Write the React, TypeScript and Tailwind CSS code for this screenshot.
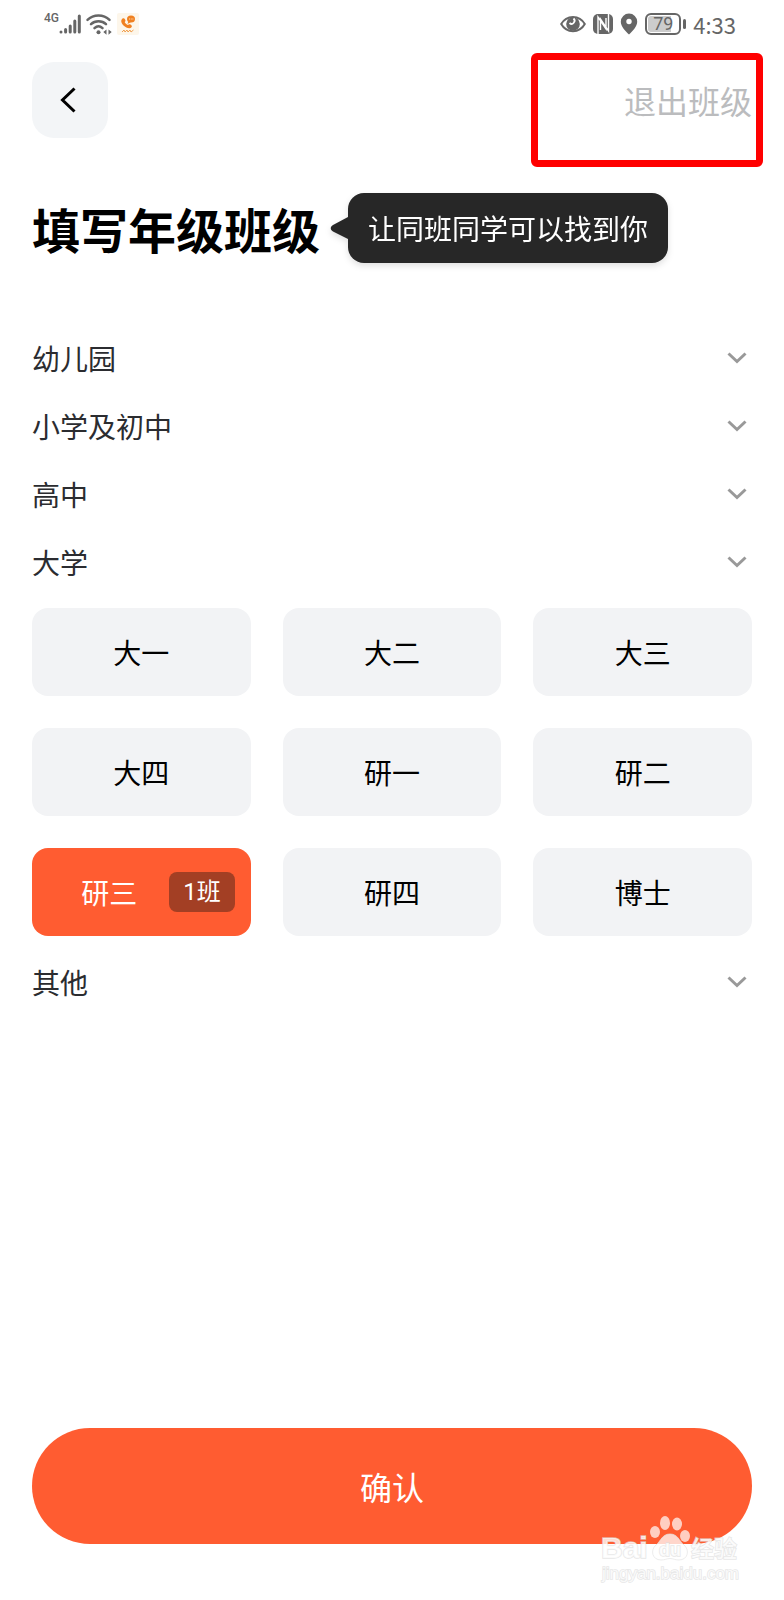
import React, { useState } from 'react';

const OTHER_STAGES = ['幼儿园', '小学及初中', '高中'];
const GRADES = ['大一', '大二', '大三', '大四', '研一', '研二', '研三', '研四', '博士'];

const StatusBar = () => (
  <div className="h-12 px-12 flex items-center justify-between text-[#666666]">
    <div className="flex items-center gap-1">
      <div className="flex items-start">
        <span className="text-[12px] leading-3 -mt-0.5 -ml-1 font-[Roboto,sans-serif] font-medium">4G</span>
        <svg width="22" height="20" viewBox="0 0 22 20" stroke="currentColor" strokeWidth="3" strokeLinecap="round">
          <path d="M2 18v0M6.600 18v-2.500M11.200 18v-6M15.800 18V7M20.300 18V2" />
        </svg>
      </div>
      <svg width="28" height="22" viewBox="0 0 28 22" fill="none" stroke="currentColor" strokeWidth="2.500" strokeLinecap="round">
        <path d="M2.500 6.800C8.500 1 18.500 1 24.500 6.800" />
        <path d="M6 11.200C10 7.300 17 7.300 21 11.200" />
        <path d="M9.500 15.200C12 12.800 15 12.800 17.500 15.200" />
        <circle cx="13.500" cy="19.300" r="2" fill="currentColor" stroke="none" />
        <path d="M21.500 16.500l-3.200 2.600 3.200 2.600zM23.500 16.500l3.200 2.600-3.200 2.600z" fill="currentColor" stroke="none" />
      </svg>
      {/* call app notification */}
      <svg width="22" height="22" viewBox="0 0 22 22">
        <rect width="22" height="22" rx="2" fill="#fdf6ea" />
        <path
          d="M5.500 5.500C3.500 7 4 10 6.500 12.500C9 15 13 16 14.500 14.300C15.300 13.300 14.800 12.300 13.500 11.500C12.300 10.800 11.600 11.200 11 12C9.500 11.500 8.300 10.300 7.700 9C8.600 8.300 8.700 7.600 8.100 6.500C7.400 5.200 6.500 4.800 5.500 5.500Z"
          fill="#f08020"
        />
        <ellipse cx="14" cy="6" rx="4" ry="3.600" fill="#f08020" />
        <path d="M11.500 8l-1 3 3.500-2z" fill="#f08020" />
        <path d="M12 6h.8M13.800 6h.8M15.500 6h.8" stroke="#fdf1dc" />
        <path d="M5 19l2-2 1 2 2-2 1 2 2-2 1 2 2.500-2" fill="none" stroke="#f0a050" />
      </svg>
    </div>

    <div className="flex items-center gap-[7px]">
      <svg width="26" height="18" viewBox="0 0 26 18" fill="none">
        <path d="M1.200 9C6.500-.5 19.500-.5 24.800 9C19.500 18.500 6.500 18.500 1.200 9Z" stroke="currentColor" strokeWidth="2" />
        <circle cx="13" cy="9" r="6.800" fill="currentColor" />
        <path d="M13.500 3.500a3 3 0 0 1-4 4.500" stroke="#fff" strokeWidth="1.800" />
      </svg>
      <svg width="20" height="20" viewBox="0 0 20 20">
        <rect width="20" height="20" rx="5" fill="currentColor" />
        <path d="M5 20V3L13 15V4M15.500 0V17L7.500 5V16" fill="none" stroke="#fff" strokeWidth="1.400" />
      </svg>
      <svg width="18" height="22" viewBox="0 0 18 22">
        <path d="M9 .5a8.200 8.200 0 0 1 8.200 8.200C17.200 13.500 12.500 18 9 21.500C5.500 18 .8 13.500.8 8.700A8.200 8.200 0 0 1 9 .5Z" fill="currentColor" />
        <circle cx="9" cy="8.500" r="2.700" fill="#fff" />
      </svg>
      <div className="flex items-center gap-0.5">
        <div className="w-9 h-[22px] rounded-md border-2 border-current bg-linear-to-r from-[#cccccc] from-75% to-white to-75% ring-1 ring-inset ring-white flex items-center justify-center text-[18px] leading-4 font-[Roboto,sans-serif]">
          79
        </div>
        <span className="w-[3px] h-2.5 rounded-sm bg-current" />
      </div>
      <span className="text-[22px] leading-6">4:33</span>
    </div>
  </div>
);

const StageRow = ({ label }: { label: string }) => (
  <button type="button" className="w-full h-17 flex items-center justify-between text-[28px] leading-10 text-[#2b2c30]">
    {label}
    <svg className="mr-1" width="22" height="14" viewBox="0 0 22 14" fill="none" stroke="#999999" strokeWidth="3">
      <path d="M2.500 2.500L11 10.500L19.500 2.500" />
    </svg>
  </button>
);

const Watermark = () => (
  <svg
    className="absolute right-10 bottom-3 pointer-events-none"
    width="144"
    height="76"
    viewBox="0 0 144 76"
    fill="#ffffff"
    fontFamily="'Liberation Sans', 'Noto Sans CJK SC', sans-serif"
  >
    <g fillOpacity="0.7">
      <ellipse cx="55" cy="20" rx="5" ry="6" />
      <ellipse cx="65" cy="11" rx="5" ry="7" />
      <ellipse cx="77" cy="12" rx="5" ry="6.500" />
      <ellipse cx="85" cy="24" rx="5" ry="6" />
    </g>
    <path
      d="M70 22C78 22 79 29 84 33C90 38 88 48 79 48C75 48 73 46.500 70 46.500C67 46.500 65 48 61 48C52 48 50 38 56 33C61 29 62 22 70 22Z"
      fillOpacity="0.75"
      stroke="#e4e4e4"
      strokeOpacity="0.7"
    />
    <g fillOpacity="0.8" stroke="#dcdcdc" strokeOpacity="0.7" strokeWidth="1.500" paintOrder="stroke">
      <text x="1" y="46" fontSize="30" fontWeight="700">Bai</text>
      <text x="59" y="44" fontSize="18" fontWeight="700">du</text>
      <text x="91" y="45" fontSize="23" fontWeight="500">经验</text>
      <text x="2" y="67" fontSize="17">jingyan.baidu.com</text>
    </g>
  </svg>
);

export default function App() {
  const [grade, setGrade] = useState('研三');

  return (
    <div className="relative min-h-screen flex flex-col bg-white text-black font-['Noto_Sans_CJK_SC',sans-serif]">
      <StatusBar />

      <header className="px-8 pt-3.5 flex justify-between">
        <button type="button" aria-label="返回" className="size-19 rounded-[22px] bg-[#f3f5f7] flex items-center justify-center">
          <svg width="20" height="28" viewBox="0 0 20 28" fill="none" stroke="#000" strokeWidth="3">
            <path d="M14.500 2.500L2.500 14L14.500 25.500" />
          </svg>
        </button>
        <div className="relative flex items-center">
          <button type="button" className="text-[32px] leading-10 text-[#bbbcbe]">退出班级</button>
          <div className="absolute -left-[93px] -right-[11px] -top-[9px] -bottom-[29px] border-[7px] border-[#ff0000] rounded-md pointer-events-none" />
        </div>
      </header>

      <main className="px-8 pt-[55px]">
        <div className="flex items-center gap-2.5">
          <h1 className="text-[48px] leading-14 font-bold">填写年级班级</h1>
          <div className="flex items-center drop-shadow-md">
            <svg width="18" height="22" viewBox="0 0 18 22" fill="#272727">
              <path d="M18 0V22L3 14.500C0 13 0 9.500 3 8Z" />
            </svg>
            <p className="h-[70px] px-5 rounded-2xl bg-[#272727] text-white text-[28px] flex items-center">让同班同学可以找到你</p>
          </div>
        </div>

        <div className="mt-[61px]">
          {OTHER_STAGES.map((stage) => (
            <StageRow key={stage} label={stage} />
          ))}
          <StageRow label="大学" />
          <div className="my-3 grid grid-cols-3 gap-8">
            {GRADES.map((item) =>
              item === grade ? (
                <button
                  key={item}
                  type="button"
                  className="h-22 pr-4 rounded-2xl bg-[#ff5c31] text-white text-[28px] flex items-center justify-end gap-8"
                >
                  {item}
                  <span className="h-10 px-3.5 rounded-lg bg-[#a33f24] text-[24px] flex items-center font-[Roboto,'Noto_Sans_CJK_SC',sans-serif]">
                    1班
                  </span>
                </button>
              ) : (
                <button
                  key={item}
                  type="button"
                  onClick={() => setGrade(item)}
                  className="h-22 rounded-2xl bg-[#f2f3f5] text-[28px]"
                >
                  {item}
                </button>
              )
            )}
          </div>
          <StageRow label="其他" />
        </div>
      </main>

      <footer className="mt-auto px-8 pb-14">
        <button type="button" className="w-full h-29 rounded-full bg-[#ff5c31] text-white text-[32px]">确认</button>
      </footer>
      <Watermark />
    </div>
  );
}
